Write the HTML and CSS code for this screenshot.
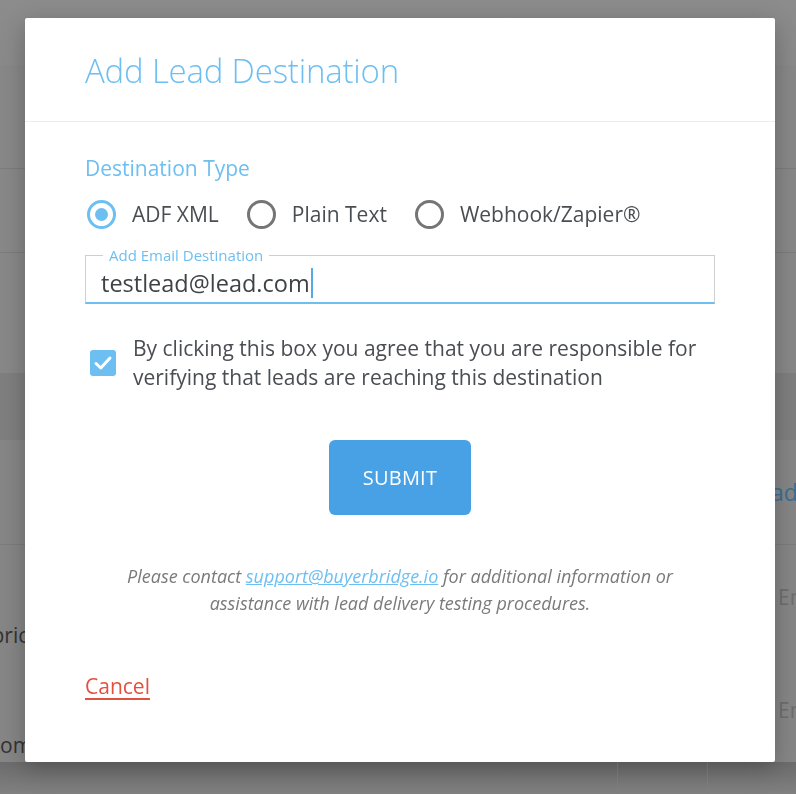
FILE: index.html
```html
<!DOCTYPE html>
<html>
<head>
<meta charset="utf-8">
<link rel="stylesheet" href="styles.css">
</head>
<body>
<div class="page">
  <div class="bg-top"></div>
  <div class="bg-row r1"></div>
  <div class="bg-row r2"></div>
  <div class="bg-row r3"></div>
  <div class="bg-band"></div>
  <div class="bg-cols">
    <div class="bg-col left">
      <div class="bg-cell c1"></div>
      <div class="bg-cell c2"><span class="bg-text t1">Fabric</span></div>
      <div class="bg-cell c3"><span class="bg-text t2">com</span></div>
    </div>
    <div class="bg-col mid"></div>
    <div class="bg-col right">
      <div class="bg-cell c1"><span class="bg-blue">Lead</span></div>
      <div class="bg-cell c2"><span class="bg-grey">Email</span></div>
      <div class="bg-cell c3"><span class="bg-grey">Email</span></div>
    </div>
  </div>
</div>

<div class="modal">
  <div class="modal-header">
    <h1 class="modal-title">Add Lead Destination</h1>
  </div>
  <div class="modal-body">
    <div class="section-label">Destination Type</div>
    <div class="radios">
      <label class="radio checked"><span class="radio-circle"></span><span>ADF XML</span></label>
      <label class="radio"><span class="radio-circle"></span><span>Plain Text</span></label>
      <label class="radio"><span class="radio-circle"></span><span>Webhook/Zapier®</span></label>
    </div>
    <fieldset class="field">
      <legend class="field-legend">Add Email Destination</legend>
      <div class="field-value">testlead@lead.com<span class="caret"></span></div>
    </fieldset>
    <div class="agree">
      <span class="checkbox">
        <svg width="26" height="26" viewBox="0 0 26 26"><path d="M6 13.5 L10.8 18 L20 8" fill="none" stroke="#fff" stroke-width="3" stroke-linecap="round" stroke-linejoin="round"/></svg>
      </span>
      <p class="agree-text">By clicking this box you agree that you are responsible for verifying that leads are reaching this destination</p>
    </div>
    <div class="submit-wrap">
      <button class="submit">SUBMIT</button>
    </div>
    <p class="info">Please contact <a class="info-link" href="#">support@buyerbridge.io</a> for additional information or<br>assistance with lead delivery testing procedures.</p>
    <a class="cancel" href="#">Cancel</a>
  </div>
</div>
</body>
</html>
```
FILE: styles.css
```css
* { box-sizing: border-box; }
html, body { margin: 0; padding: 0; }
body {
  width: 796px;
  height: 794px;
  overflow: hidden;
  background: #868686;
  font-family: "Open Sans", "Liberation Sans", sans-serif;
}
.page { display: flex; flex-direction: column; height: 794px; }
.bg-top { height: 65px; flex: none; background: linear-gradient(#8c8c8c, #8a8a8a); }
.bg-row { flex: none; background: #888888; border-bottom: 1px solid #7c7c7c; }
.r1 { height: 104px; }
.r2 { height: 84px; }
.r3 { height: 120px; border-bottom: none; }
.bg-band { flex: none; height: 67px; background: #7f7f7f; }
.bg-cols { flex: 1; display: flex; background: linear-gradient(#868686 0, #868686 322px, #6c6c6c 322px, #808080 354px); }
.bg-col { display: flex; flex-direction: column; }
.bg-col.left { flex: none; width: 617px; }
.bg-col.mid { flex: none; width: 91px; border-left: 1px solid #7e7e7e; border-right: 1px solid #7e7e7e; }
.bg-col.right { flex: 1; min-width: 0; overflow: hidden; }
.bg-cell { display: flex; align-items: center; flex: none; }
.bg-cell.c1 { height: 105px; border-bottom: 1px solid #7c7c7c; }
.left .bg-cell.c2 { height: 180px; }
.left .bg-cell.c3 { height: 40px; }
.right .bg-cell.c2 { height: 104px; }
.right .bg-cell.c3 { height: 122px; }
.bg-text { font-size: 21px; color: #333; white-space: nowrap; }
.bg-text.t1 { margin-left: -31px; }
.bg-text.t2 { margin-left: -10px; }
.bg-blue { font-size: 23px; color: #3b6f95; margin-left: 38px; white-space: nowrap; }
.bg-grey { font-size: 21px; color: #6e6e6e; margin-left: 70px; white-space: nowrap; }

.modal {
  position: fixed;
  left: 25px;
  top: 18px;
  width: 750px;
  height: 744px;
  background: #fff;
  border-radius: 2px;
  box-shadow: 0 6px 24px rgba(0,0,0,0.25);
}
.modal-header {
  height: 104px;
  border-bottom: 1px solid #ececec;
  padding: 34px 60px 0;
}
.modal-title {
  margin: 0;
  font-size: 33px;
  font-weight: 300;
  color: #6dbff2;
  line-height: 38px;
  letter-spacing: -0.2px;
}
.modal-body { padding: 0 60px; }
.section-label {
  margin-top: 32px;
  font-size: 21px;
  line-height: 28px;
  color: #6dbff2;
  font-weight: 400;
}
.radios { display: flex; gap: 28px; margin-top: 17px; padding-left: 2px; }
.radio { display: flex; align-items: center; gap: 16px; font-size: 21px; color: #4a4d52; line-height: 30px; }
.radio-circle {
  width: 29px; height: 29px; border-radius: 50%;
  border: 3px solid #757575;
  display: flex; align-items: center; justify-content: center;
}
.radio.checked .radio-circle { border-color: #6dbff2; }
.radio.checked .radio-circle::after {
  content: ""; width: 13px; height: 13px; border-radius: 50%; background: #6dbff2;
}
.field {
  margin: 17px 0 0;
  padding: 0 15px 0 15px;
  border: 1px solid #cfcfcf;
  border-bottom: 2px solid #6dbff2;
  height: 58px;
  width: 630px;
}
.field-legend {
  font-size: 15px;
  color: #6dbff2;
  padding: 0 6px;
  margin-left: 2px;
  line-height: 18px;
}
.field-value {
  font-size: 23.5px;
  color: #3f4246;
  line-height: 30px;
  margin-top: 4px;
  display: flex;
  align-items: center;
}
.caret { display: inline-block; width: 2px; height: 30px; background: #57a9e6; margin-left: 1px; }
.agree { display: flex; align-items: flex-start; gap: 17px; margin-top: 30px; padding-left: 5px; }
.checkbox {
  flex: none;
  width: 26px; height: 26px; border-radius: 3px;
  background: #6dbff2;
  margin-top: 16px;
  display: flex; align-items: center; justify-content: center;
}
.agree-text {
  margin: 0;
  font-size: 21px;
  line-height: 29px;
  color: #4a4d52;
}
.submit-wrap { display: flex; justify-content: center; margin-top: 48px; }
.submit {
  width: 142px; height: 75px;
  background: #47a1e4;
  border: none; border-radius: 6px;
  color: #fff;
  font-family: "Open Sans", "Liberation Sans", sans-serif;
  font-size: 20px;
  letter-spacing: 0.2px;
}
.info {
  margin: 48px 0 0;
  text-align: center;
  font-style: italic;
  font-size: 18px;
  line-height: 27px;
  color: #7a7a7a;
}
.info-link { color: #6dbff2; text-decoration: underline; }
.cancel {
  display: inline-block;
  margin-top: 55px;
  font-size: 21px;
  line-height: 28px;
  color: #e2503e;
  text-decoration: underline;
  text-underline-offset: 4px;
  text-decoration-thickness: 2px;
}
```
